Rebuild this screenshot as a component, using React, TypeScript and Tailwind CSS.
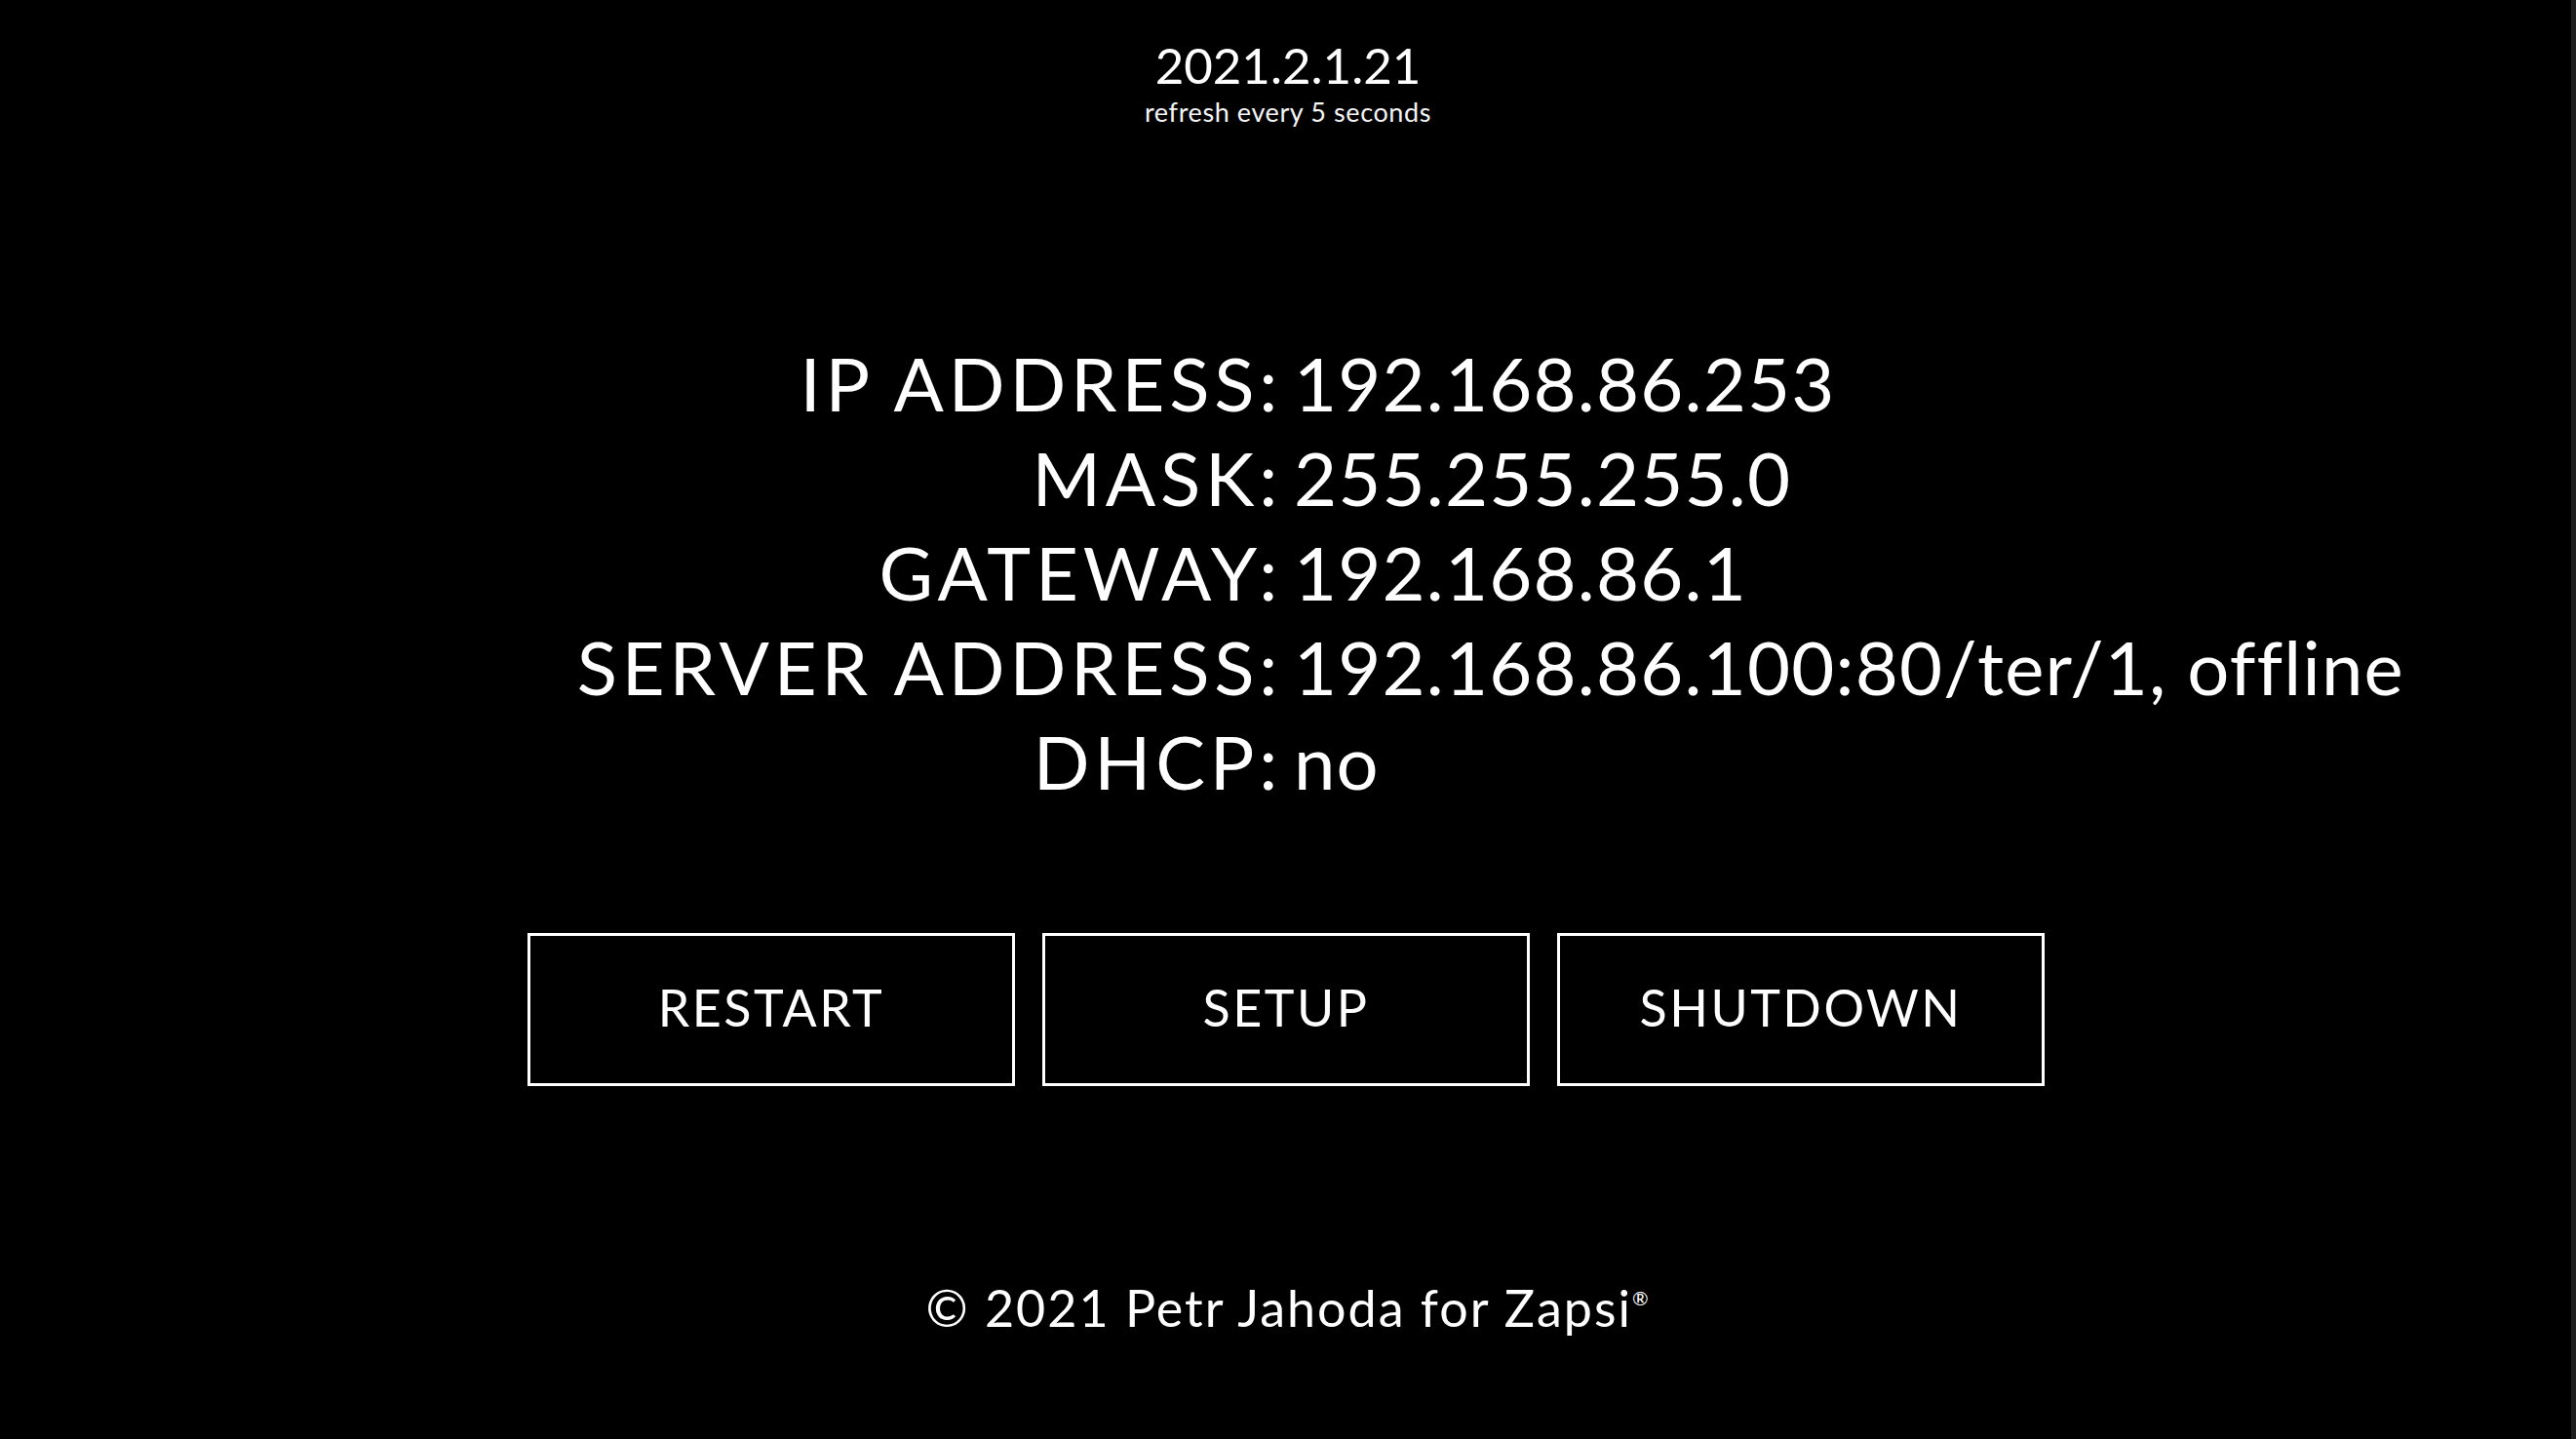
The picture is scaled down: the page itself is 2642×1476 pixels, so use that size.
import React from "react";

const rows: [string, string][] = [
  ["IP ADDRESS:", "192.168.86.253"],
  ["MASK:", "255.255.255.0"],
  ["GATEWAY:", "192.168.86.1"],
  ["SERVER ADDRESS:", "192.168.86.100:80/ter/1, offline"],
  ["DHCP:", "no"],
];

export default function App() {
  return (
    <div className="relative min-h-screen w-full bg-black text-white font-['Lato',sans-serif] overflow-hidden">
      <div className="flex flex-col items-center pt-[36px]">
        <div className="text-[51px] leading-[1.2]">2021.2.1.21</div>
        <div className="mt-[2px] text-[27px] leading-[1.2] tracking-[0.6px] text-gray-100">refresh every 5 seconds</div>

        <div className="mt-[212px] grid grid-cols-2 gap-x-[12px] w-full text-[76px] leading-[97px]">
          {rows.map(([label, value]) => (
            <React.Fragment key={label}>
              <div className="text-right whitespace-nowrap tracking-[4.8px]">{label}</div>
              <div className="text-left whitespace-nowrap tracking-[1.2px]">{value}</div>
            </React.Fragment>
          ))}
        </div>

        <div className="mt-[128px] flex gap-[28px] -translate-x-[2px]">
          {["RESTART", "SETUP", "SHUTDOWN"].map((b) => (
            <button
              key={b}
              className="w-[500px] h-[157px] border-[3px] border-white bg-black text-white text-[52px] tracking-[2.5px] flex items-center justify-center pb-[5px]"
            >
              {b}
            </button>
          ))}
        </div>

        <div className="mt-[196px] text-[52px] leading-[1.2] tracking-[2px]">
          © 2021 Petr Jahoda for Zapsi<span className="relative -top-[22px] text-[20px]">®</span>
        </div>
      </div>
      <div className="absolute top-0 right-0 h-full w-[5px] bg-[#1e1e1e]" />
    </div>
  );
}
